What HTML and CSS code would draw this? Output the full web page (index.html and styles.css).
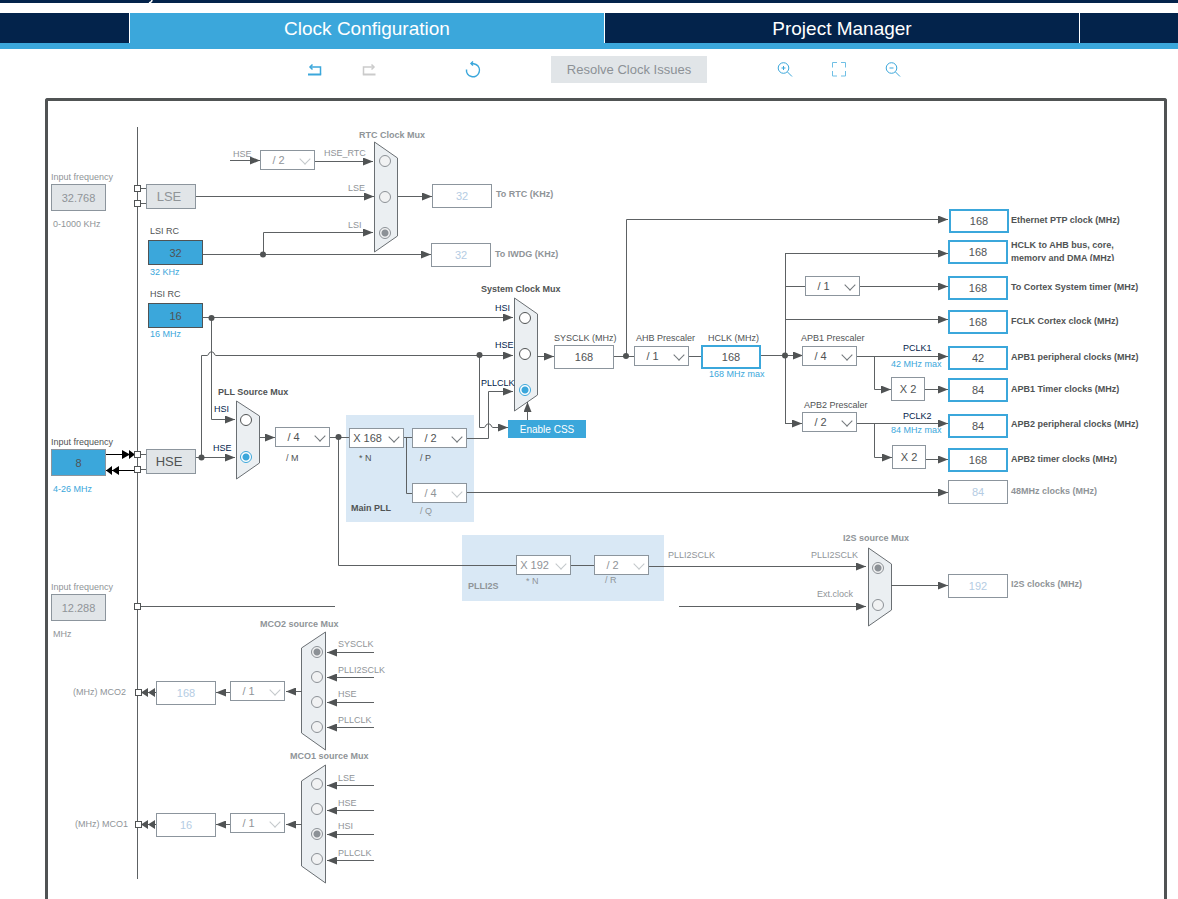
FILE: index.html
```
<!DOCTYPE html>
<html lang="en">
<head>
    <meta charset="UTF-8">
    <meta name="viewport" content="width=device-width, initial-scale=1.0">
    <title>Clock Configuration</title>
    <link rel="stylesheet" href="styles.css">
</head>
<body>
    <header>
        <div class="strip">
            <svg width="6" height="3" viewBox="0 0 6 3"><path d="M1 3 Q4 2 4 0" fill="none" stroke="#fff" stroke-width="1.500"/></svg>
        </div>
        <nav class="tabs">
            <button class="tab" aria-label="Pinout"></button>
            <button class="tab active">Clock Configuration</button>
            <button class="tab">Project Manager</button>
            <button class="tab" aria-label="Tools"></button>
        </nav>
    </header>
    <div class="toolbar">
        <div class="group">
            <button class="icon" aria-label="Undo">
                <svg width="18" height="18" viewBox="0 0 18 18" fill="none" stroke="#3ba7db" stroke-width="1.500"><path d="M4 6h10.500v7.500"/><path d="M6.500 3.500 4 6l2.500 2.500"/><path d="M2 13.500h13.200" stroke-width="2"/></svg>
            </button>
            <button class="icon" aria-label="Redo" disabled>
                <svg width="18" height="18" viewBox="0 0 18 18" fill="none" stroke="#cbcbcb" stroke-width="1.500"><path d="M14 6H3.500v7.500"/><path d="M11.500 3.500 14 6l-2.500 2.500"/><path d="M2.800 13.500H15.500" stroke-width="2"/></svg>
            </button>
        </div>
        <button class="icon reset" aria-label="Reset">
            <svg width="18" height="18" viewBox="0 0 18 18" fill="none" stroke="#3ba7db" stroke-width="1.500"><path d="M2.500 8.500A6.500 6.500 0 1 0 12 3.500Q10 2.500 7 2.500"/><path d="M9 0.500 7 2.500l2 2"/></svg>
        </button>
        <button class="resolve" disabled>Resolve Clock Issues</button>
        <div class="group">
            <button class="icon" aria-label="Zoom in">
                <svg width="18" height="18" viewBox="0 0 18 18" fill="none" stroke="#3ba7db"><circle cx="7.500" cy="7" r="5.300"/><path d="M11.500 11l4.500 4.500M5.500 7h4M7.500 5v4"/></svg>
            </button>
            <button class="icon" aria-label="Fit to window">
                <svg width="18" height="18" viewBox="0 0 18 18" fill="none" stroke="#6fbfe5"><path d="M2.500 6.500v-5h4.500M11 1.500h4.500v5M15.500 10v5h-4.500M7 15h-4.500v-5"/></svg>
            </button>
            <button class="icon" aria-label="Zoom out">
                <svg width="18" height="18" viewBox="0 0 18 18" fill="none" stroke="#3ba7db"><circle cx="7.500" cy="7" r="5.300"/><path d="M11.500 11l4.500 4.500M5.500 7h4"/></svg>
            </button>
        </div>
    </div>
    <main class="board">
        <div class="canvas" id="canvas">
            <svg class="wires" width="1116" height="783" viewBox="48 101 1116 783">
                <defs>
                    <marker id="arrow" markerUnits="userSpaceOnUse" markerWidth="10" markerHeight="8" refX="10" refY="4" orient="auto">
                        <path d="M0 0L10 4L0 8z" fill="#505354"/>
                    </marker>
                </defs>
                <rect class="pll" x="346" y="415" width="128" height="107"/>
                <rect class="pll" x="462" y="535" width="202" height="66"/>
                <g class="mux">
                    <path d="M374.500 142L397.500 158V236L374.500 252z"/>
                    <path d="M514.500 298L537.500 314V395L514.500 411z"/>
                    <path d="M236.500 401L259.500 416V463L236.500 479z"/>
                    <path d="M868.500 548L891.500 564V610L868.500 626z"/>
                    <path d="M325.500 632L301.500 648V733L325.500 750z"/>
                    <path d="M325.500 765L301.500 781V866L325.500 883z"/>
                </g>
                <!-- plain wires -->
                <g class="wire">
                    <path d="M137.500 127V879"/>
                    <path d="M140 188.500h6M140 203.500h6M140 454.500h6M140 469.500h6"/>
                    <path d="M140 606.500H335"/>
                    <path d="M330 437.500H349M338.500 437V565.500H516M404 437.500h8M406.500 437V493.500H412"/>
                    <path d="M571 565.500h23"/>
                    <path d="M614 356.500h20M689 356.500h12M785.500 253V423M785 286.500h20"/>
                </g>
                <!-- wires that end in an arrow -->
                <g class="wire to">
                    <path d="M230 160.500H260"/>
                    <path d="M315 161.500H373"/>
                    <path d="M196 196.500H374"/>
                    <path d="M203 254.500H431"/>
                    <path d="M263.500 254V232.500H373"/>
                    <path d="M398 196.500H432"/>
                    <path d="M203 317.500H513"/>
                    <path d="M211.500 318V419.500H235"/>
                    <path d="M196 457.500H235"/>
                    <path d="M201.500 457V355.500H207Q209 355 209 353Q211.500 350 214 353Q214 355 216 355.500H513"/>
                    <path d="M479.500 355V427.500H484Q486 427 486 425Q488.500 422 491 425Q491 427 493 427.500H508"/>
                    <path d="M260 437.500H275"/>
                    <path d="M467 438.500H488.500V391.500H513"/>
                    <path d="M537 356.500H554"/>
                    <path d="M527.500 420V402"/>
                    <path d="M467 492.500H948"/>
                    <path d="M626.500 356V219.500H948"/>
                    <path d="M761 355.500H803"/>
                    <path d="M785 253.500H948"/>
                    <path d="M860 286.500H948"/>
                    <path d="M785 319.500H948"/>
                    <path d="M785 423.500H802"/>
                    <path d="M857 356.500H948"/>
                    <path d="M874.500 356V389.500H891"/>
                    <path d="M925 389.500H948"/>
                    <path d="M857 423.500H948"/>
                    <path d="M874.500 423V457.500H892"/>
                    <path d="M926 459.500H948"/>
                    <path d="M649 566.500H866"/>
                    <path d="M679 606.500H866"/>
                    <path d="M891 585.500H948"/>
                    <path d="M374 652.500H327"/>
                    <path d="M374 677.500H327"/>
                    <path d="M374 702.500H327"/>
                    <path d="M374 727.500H327"/>
                    <path d="M374 785.500H327"/>
                    <path d="M374 810.500H327"/>
                    <path d="M374 834.500H327"/>
                    <path d="M374 860.500H327"/>
                    <path d="M302 691.500H286"/>
                    <path d="M230 692.500H216"/>
                    <path d="M302 824.500H286"/>
                    <path d="M230 824.500H216"/>
                </g>
                <!-- double arrows on the pins -->
                <path d="M106 454.500H134M106 470.500H134" stroke="#000"/>
                <path d="M122 450l8 4.500l-8 4.500zM129 450l6 4.500l-6 4.500zM112 466l-6 4.500l6 4.500zM119 466l-7 4.500l7 4.500z"/>
                <g fill="#505354">
                    <path d="M141 692h15v1h-15zM141 824h15v1h-15z"/>
                    <path d="M148 688l-7 4.500l7 4.500zM155 688l-7 4.500l7 4.500zM148 820l-7 4.500l7 4.500zM155 820l-7 4.500l7 4.500z"/>
                    <circle cx="263" cy="254.500" r="3"/>
                    <circle cx="211.500" cy="318" r="3"/>
                    <circle cx="201.500" cy="457.500" r="3"/>
                    <circle cx="479.500" cy="355" r="3"/>
                    <circle cx="338.500" cy="437" r="3"/>
                    <circle cx="626" cy="356" r="3"/>
                    <circle cx="785" cy="355.500" r="3"/>
                </g>
                <g class="pin">
                    <rect x="134.500" y="185.500" width="6" height="6"/>
                    <rect x="134.500" y="200.500" width="6" height="6"/>
                    <rect x="134.500" y="451.500" width="6" height="6"/>
                    <rect x="134.500" y="466.500" width="6" height="6"/>
                    <rect x="134.500" y="603.500" width="6" height="6"/>
                    <rect x="135.500" y="689.500" width="6" height="6"/>
                    <rect x="135.500" y="821.500" width="6" height="6"/>
                </g>
            </svg>
        </div>
    </main>
    <script src="clock.js"></script>
</body>
</html>
```

FILE: styles.css
```
* {
    box-sizing: border-box;
}
body {
    margin: 0;
    min-height: 100vh;
    display: flex;
    flex-direction: column;
    background: #fff;
    color: #505354;
    font-family: "Liberation Sans", Arial, sans-serif;
}
button, input, select {
    margin: 0;
    padding: 0;
    border: 0;
    border-radius: 0;
    font-family: inherit;
    color: inherit;
    opacity: 1;
}

/* header */
.strip {
    height: 3px;
    padding-left: 148px;
    background: #03234b;
}
.strip svg {
    display: block;
}
.tabs {
    display: grid;
    grid-template-columns: 130fr 475fr 475fr 98fr;
    margin-top: 10px;
    border-bottom: 6px solid #3ba7db;
}
.tab {
    height: 30px;
    padding-top: 2px;
    border-right: 1px solid #fff;
    background: #03234b;
    color: #fff;
    font-size: 19px;
    line-height: 28px;
}
.tab:last-child {
    border-right: 0;
}
.tab.active {
    background: #3ba7db;
}

/* toolbar */
.toolbar {
    display: flex;
    justify-content: center;
    align-items: center;
    height: 49px;
    padding: 0 0 8px 30px;
}
.group {
    display: flex;
    gap: 36px;
}
.icon {
    width: 18px;
    height: 18px;
    background: none;
}
.icon svg {
    display: block;
}
.reset {
    margin-left: 86px;
}
.resolve {
    margin: 0 69px;
    padding: 0 16px;
    height: 27px;
    background: #e1e5e8;
    color: #8c9196;
    font-size: 13px;
}

/* diagram */
.board {
    flex: 1;
    margin: 0 11px 0 45px;
    border: 3px solid #505354;
    border-bottom: 0;
    border-radius: 3px 3px 0 0;
}
.canvas {
    position: relative;
    min-height: 783px;
}
.wires {
    display: block;
}
.pll {
    fill: #d9e8f5;
}
.mux path {
    fill: #ebeff2;
    stroke: #6a6f73;
}
.wire path {
    fill: none;
    stroke: #5d6163;
}
.to path {
    marker-end: url(#arrow);
}
.pin rect {
    fill: #fff;
    stroke: #505354;
}
.node {
    position: absolute;
}
.label {
    font-size: 9px;
    line-height: 12px;
    white-space: nowrap;
}
.bold {
    font-weight: bold;
}
.off {
    color: #8f9498;
}
.blue {
    color: #3ba7db;
}
.navy {
    color: #03234b;
}
.clip {
    width: 130px;
    height: 22px;
    overflow: hidden;
    line-height: 13px;
    white-space: normal;
}

.box {
    width: 60px;
    height: 24px;
    border: 1px solid #8c959d;
    background: #fff;
    font-size: 11px;
    text-align: center;
}
.box.live {
    border: 2px solid #3ba7db;
}
.box.idle {
    color: #b4cce3;
}
.source {
    width: 55px;
    height: 27px;
    background: #e1e5e8;
}
.source.lit {
    background: #3ba7db;
    color: #505354;
}
.rc {
    height: 25px;
    border-color: #505354;
}
.osc {
    width: 50px;
    height: 25px;
    padding-right: 4px;
    border: 1px solid #8c959d;
    background: #e1e5e8;
    font-size: 13px;
    line-height: 23px;
    text-align: center;
}
.mult {
    width: 34px;
    height: 24px;
    border: 1px solid #8c959d;
    background: #fff;
    font-size: 11px;
    line-height: 22px;
    text-align: center;
}
.css {
    width: 78px;
    height: 18px;
    background: #3ba7db;
    color: #fff;
    font-size: 10px;
}

.drop {
    width: 55px;
    height: 20px;
}
.drop select {
    width: 100%;
    height: 100%;
    padding-right: 18px;
    border: 1px solid #8c959d;
    background: #fff;
    font-size: 11px;
    text-align: center;
    appearance: none;
}
.drop::after {
    content: "";
    position: absolute;
    top: 5px;
    right: 6px;
    width: 7px;
    height: 7px;
    border: solid #73787c;
    border-width: 0 1px 1px 0;
    transform: rotate(45deg);
    pointer-events: none;
}
.drop.off::after {
    border-color: #c4c8cb;
}

.radio {
    width: 12px;
    height: 12px;
    border: 1px solid #505354;
    border-radius: 50%;
    background: #fff;
    appearance: none;
}
.radio:checked {
    border-color: #3ba7db;
    background: radial-gradient(#3ba7db 3px, #fff 4px);
}
.radio.off {
    border-color: #8c9196;
    background: #f1f2f3;
}
.radio.off:checked {
    background: radial-gradient(#8c9196 3px, #f1f2f3 4px);
}
```

FILE: clock.js
```
// The diagram starts at this point, all nodes below are given in sheet coordinates
const X0 = 48, Y0 = 101;
const canvas = document.getElementById('canvas');

function node(tag, cls, x, y) {
    const e = document.createElement(tag);
    e.className = 'node ' + cls;
    e.style.left = (x - X0) + 'px';
    e.style.top = (y - Y0) + 'px';
    canvas.appendChild(e);
    return e;
}

// id, x, y, value, class
const boxes = [
    ['lseFreq', 51, 184, '32.768', 'source off'],
    ['lsi', 148, 240, '32', 'source rc lit'],
    ['hsi', 148, 303, '16', 'source rc lit'],
    ['hseFreq', 51, 449, '8', 'source lit'],
    ['i2sFreq', 51, 594, '12.288', 'source off'],
    ['rtc', 432, 184, '32', 'idle'],
    ['iwdg', 431, 243, '32', 'idle'],
    ['sysclk', 554, 345, '168', ''],
    ['hclk', 701, 345, '168', 'live'],
    ['eth', 949, 209, '168', 'live'],
    ['ahb', 948, 240, '168', 'live'],
    ['cortex', 948, 276, '168', 'live'],
    ['fclk', 948, 310, '168', 'live'],
    ['apb1', 948, 346, '42', 'live'],
    ['apb1t', 948, 378, '84', 'live'],
    ['apb2', 948, 414, '84', 'live'],
    ['apb2t', 948, 448, '168', 'live'],
    ['clk48', 948, 480, '84', 'idle'],
    ['i2s', 948, 574, '192', 'idle'],
    ['mco2', 156, 681, '168', 'idle'],
    ['mco1', 156, 813, '16', 'idle']
];
for (const [id, x, y, value, cls] of boxes) {
    const e = node('input', 'box ' + cls, x, y);
    e.type = 'text';
    e.id = id;
    e.value = value;
    e.readOnly = !cls.includes('source');
}

// id, x, y, value, class, name
const drops = [
    ['rtcDiv', 260, 150, '/ 2', 'off', 'HSE divider for RTC'],
    ['pllM', 275, 427, '/ 4', '', ''],
    ['pllN', 349, 428, 'X 168', '', ''],
    ['pllP', 412, 428, '/ 2', '', ''],
    ['pllQ', 412, 483, '/ 4', 'off', ''],
    ['i2sN', 516, 555, 'X 192', 'off', ''],
    ['i2sR', 594, 555, '/ 2', 'off', ''],
    ['ahbDiv', 634, 346, '/ 1', '', ''],
    ['cortexDiv', 805, 276, '/ 1', '', 'Cortex prescaler'],
    ['apb1Div', 802, 346, '/ 4', '', ''],
    ['apb2Div', 802, 412, '/ 2', '', ''],
    ['mco2Div', 230, 681, '/ 1', 'off', 'MCO2 prescaler'],
    ['mco1Div', 230, 813, '/ 1', 'off', 'MCO1 prescaler']
];
for (const [id, x, y, value, cls, name] of drops) {
    const select = document.createElement('select');
    select.id = id;
    select.add(new Option(value));
    if (name) select.setAttribute('aria-label', name);
    node('span', 'drop ' + cls, x, y).appendChild(select);
}

// group, x of the centre, class, then [id, y of the centre], last the checked one
const muxes = [
    ['rtcMux', 385, 'off', [['rHseRtc', 161], ['rLse', 197], ['rLsi', 233]], 'rLsi'],
    ['sysMux', 525, '', [['sHsi', 318], ['sHse', 354], ['sPll', 390]], 'sPll'],
    ['pllMux', 246, '', [['pHsi', 420], ['pHse', 457]], 'pHse'],
    ['i2sMux', 878, 'off', [['iPll', 568], ['iExt', 605]], 'iPll'],
    ['mco2Mux', 317, 'off', [['m2Sys', 652], ['m2I2s', 677], ['m2Hse', 702], ['m2Pll', 727]], 'm2Sys'],
    ['mco1Mux', 317, 'off', [['m1Lse', 784], ['m1Hse', 809], ['m1Hsi', 834], ['m1Pll', 859]], 'm1Hsi']
];
for (const [name, x, cls, items, checked] of muxes) {
    for (const [id, y] of items) {
        const e = node('input', 'radio ' + cls, x - 6, y - 6);
        e.type = 'radio';
        e.name = name;
        e.id = id;
        e.checked = id == checked;
    }
}

// x, y, text, class, id of the control
const labels = [
    [51, 171, 'Input frequency', 'off', 'lseFreq'],
    [53, 218, '0-1000 KHz', 'off'],
    [150, 225, 'LSI RC', '', 'lsi'],
    [150, 266, '32 KHz', 'blue'],
    [150, 288, 'HSI RC', '', 'hsi'],
    [150, 328, '16 MHz', 'blue'],
    [51, 436, 'Input frequency', '', 'hseFreq'],
    [53, 483, '4-26 MHz', 'blue'],
    [51, 581, 'Input frequency', 'off', 'i2sFreq'],
    [53, 628, 'MHz', 'off'],
    [359, 129, 'RTC Clock Mux', 'bold off'],
    [233, 148, 'HSE', 'off'],
    [324, 147, 'HSE_RTC', 'off', 'rHseRtc'],
    [348, 182, 'LSE', 'off', 'rLse'],
    [348, 219, 'LSI', 'off', 'rLsi'],
    [496, 188, 'To RTC (KHz)', 'bold off', 'rtc'],
    [495, 248, 'To IWDG (KHz)', 'bold off', 'iwdg'],
    [481, 283, 'System Clock Mux', 'bold'],
    [495, 302, 'HSI', 'navy', 'sHsi'],
    [495, 339, 'HSE', 'navy', 'sHse'],
    [481, 377, 'PLLCLK', 'navy', 'sPll'],
    [218, 386, 'PLL Source Mux', 'bold'],
    [214, 403, 'HSI', 'navy', 'pHsi'],
    [213, 442, 'HSE', 'navy', 'pHse'],
    [286, 452, '/ M', '', 'pllM'],
    [359, 452, '* N', '', 'pllN'],
    [420, 452, '/ P', '', 'pllP'],
    [420, 505, '/ Q', 'off', 'pllQ'],
    [351, 502, 'Main PLL', 'bold'],
    [526, 575, '* N', 'off', 'i2sN'],
    [605, 574, '/ R', 'off', 'i2sR'],
    [468, 580, 'PLLI2S', 'bold off'],
    [554, 332, 'SYSCLK (MHz)', '', 'sysclk'],
    [636, 332, 'AHB Prescaler', '', 'ahbDiv'],
    [708, 332, 'HCLK (MHz)', '', 'hclk'],
    [709, 368, '168 MHz max', 'blue'],
    [801, 332, 'APB1 Prescaler', '', 'apb1Div'],
    [804, 399, 'APB2 Prescaler', '', 'apb2Div'],
    [903, 342, 'PCLK1', 'navy'],
    [891, 358, '42 MHz max', 'blue'],
    [903, 410, 'PCLK2', 'navy'],
    [891, 424, '84 MHz max', 'blue'],
    [1011, 214, 'Ethernet PTP clock (MHz)', 'bold', 'eth'],
    [1011, 239, 'HCLK to AHB bus, core, memory and DMA (MHz)', 'bold clip', 'ahb'],
    [1011, 281, 'To Cortex System timer (MHz)', 'bold', 'cortex'],
    [1011, 315, 'FCLK Cortex clock (MHz)', 'bold', 'fclk'],
    [1011, 351, 'APB1 peripheral clocks (MHz)', 'bold', 'apb1'],
    [1011, 383, 'APB1 Timer clocks (MHz)', 'bold', 'apb1t'],
    [1011, 418, 'APB2 peripheral clocks (MHz)', 'bold', 'apb2'],
    [1011, 453, 'APB2 timer clocks (MHz)', 'bold', 'apb2t'],
    [1011, 485, '48MHz clocks (MHz)', 'bold off', 'clk48'],
    [1011, 578, 'I2S clocks (MHz)', 'bold off', 'i2s'],
    [668, 549, 'PLLI2SCLK', 'off'],
    [811, 549, 'PLLI2SCLK', 'off', 'iPll'],
    [817, 588, 'Ext.clock', 'off', 'iExt'],
    [843, 532, 'I2S source Mux', 'bold off'],
    [260, 618, 'MCO2 source Mux', 'bold off'],
    [338, 638, 'SYSCLK', 'off', 'm2Sys'],
    [338, 664, 'PLLI2SCLK', 'off', 'm2I2s'],
    [338, 688, 'HSE', 'off', 'm2Hse'],
    [338, 714, 'PLLCLK', 'off', 'm2Pll'],
    [290, 750, 'MCO1 source Mux', 'bold off'],
    [338, 772, 'LSE', 'off', 'm1Lse'],
    [338, 797, 'HSE', 'off', 'm1Hse'],
    [338, 820, 'HSI', 'off', 'm1Hsi'],
    [338, 847, 'PLLCLK', 'off', 'm1Pll'],
    [73, 686, '(MHz) MCO2', 'off', 'mco2'],
    [75, 818, '(MHz) MCO1', 'off', 'mco1']
];
for (const [x, y, text, cls, id] of labels) {
    const e = node(id ? 'label' : 'span', 'label ' + cls, x, y);
    e.textContent = text;
    if (id) e.htmlFor = id;
}

node('div', 'osc off', 146, 184).textContent = 'LSE';
node('div', 'osc', 146, 449).textContent = 'HSE';
node('div', 'mult', 891, 377).textContent = 'X 2';
node('div', 'mult', 892, 445).textContent = 'X 2';
node('button', 'css', 508, 420).textContent = 'Enable CSS';
```
